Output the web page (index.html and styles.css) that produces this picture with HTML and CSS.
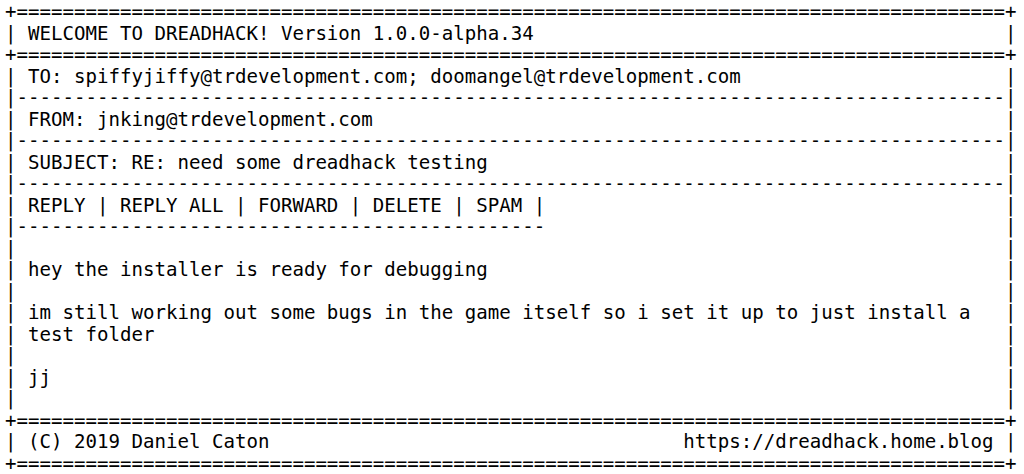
FILE: index.html
```html
<!DOCTYPE html>
<html lang="en">
<head>
  <meta charset="UTF-8" />
  <title>DreadHack</title>
  <link rel="stylesheet" href="styles.css">
</head>
<body>
<pre class="screen">+======================================================================================+
| WELCOME TO DREADHACK! Version 1.0.0-alpha.34                                         |
+======================================================================================+
| TO: spiffyjiffy@trdevelopment.com; doomangel@trdevelopment.com                       |
|--------------------------------------------------------------------------------------|
| FROM: jnking@trdevelopment.com                                                       |
|--------------------------------------------------------------------------------------|
| SUBJECT: RE: need some dreadhack testing                                             |
|--------------------------------------------------------------------------------------|
| REPLY | REPLY ALL | FORWARD | DELETE | SPAM |                                        |
|----------------------------------------------                                        |
|                                                                                      |
| hey the installer is ready for debugging                                             |
|                                                                                      |
| im still working out some bugs in the game itself so i set it up to just install a   |
| test folder                                                                          |
|                                                                                      |
| jj                                                                                   |
|                                                                                      |
+======================================================================================+
| (C) 2019 Daniel Caton                                    https://dreadhack.home.blog |
+======================================================================================+</pre>
</body>
</html>
```

FILE: styles.css
```css
body {
  margin: 0;
  padding: 1px 5px;
  background: #fff;
  color: #000;
}

.screen {
  margin: 0;
  font-family: "DejaVu Sans Mono", monospace;
  font-size: 19.1px;
  line-height: 21.5px;
}
```
